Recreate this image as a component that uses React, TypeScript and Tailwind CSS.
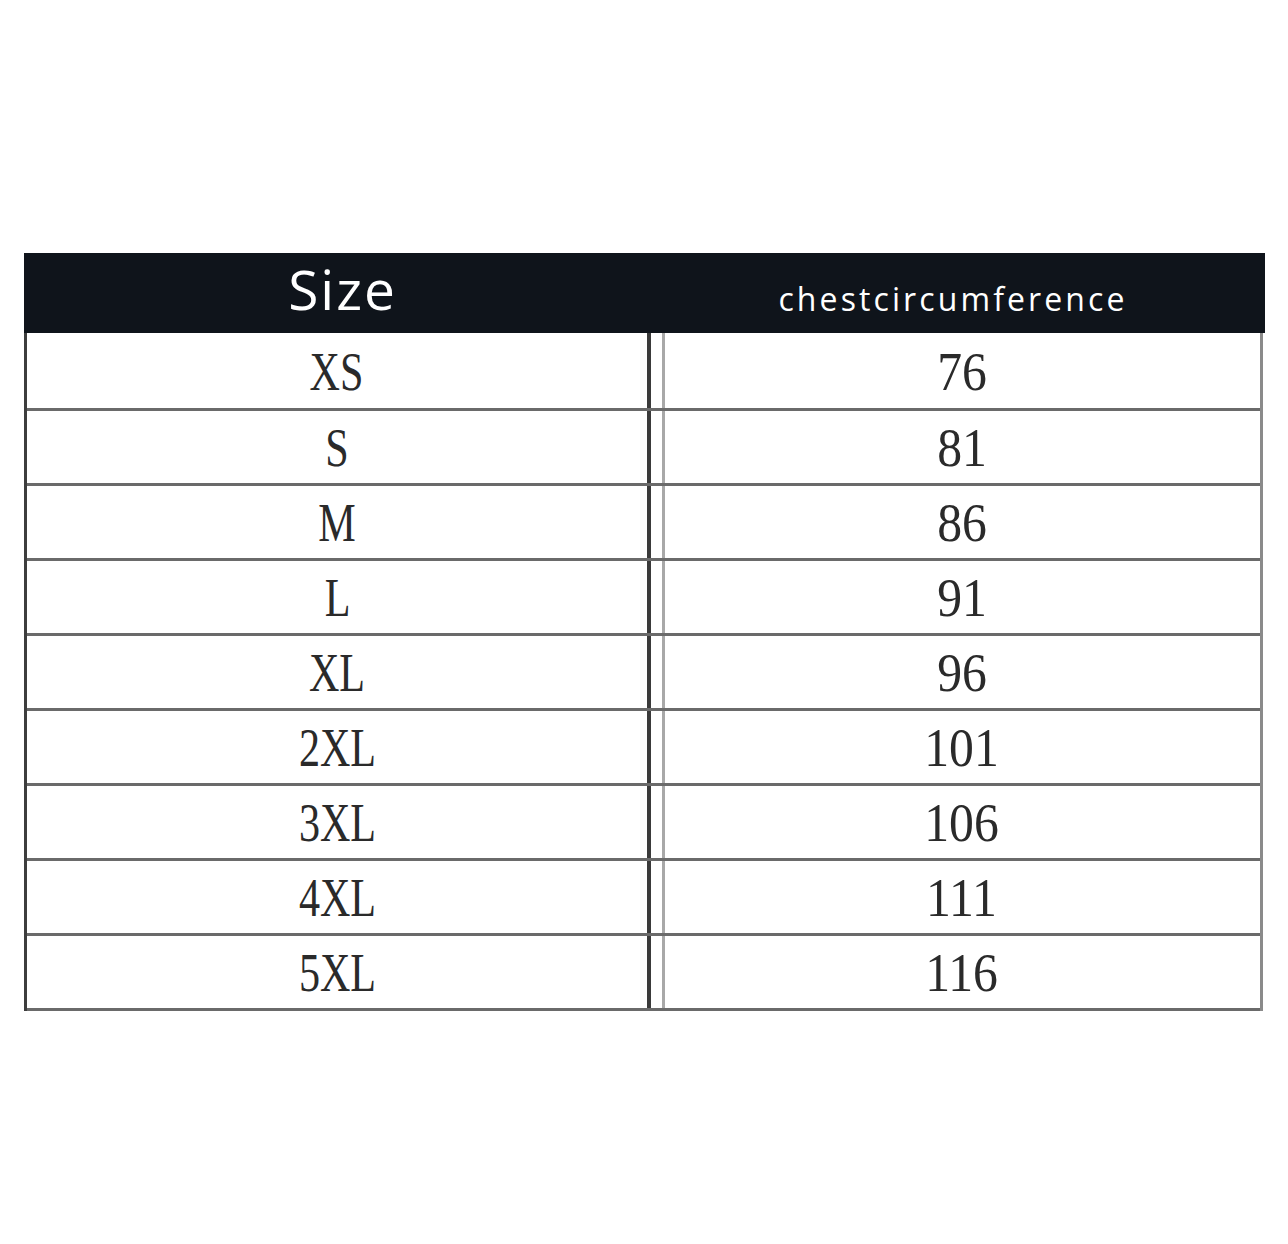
import React from 'react';

const rows = [
  ['XS', '76'],
  ['S', '81'],
  ['M', '86'],
  ['L', '91'],
  ['XL', '96'],
  ['2XL', '101'],
  ['3XL', '106'],
  ['4XL', '111'],
  ['5XL', '116'],
];

export default function App() {
  return (
    <div className="min-h-[1244px] bg-white pl-[24px] pt-[253px]">
      <div className="w-[1241px]">
        {/* header */}
        <div className="flex h-[80px] bg-[#0f141b] text-white" style={{ fontFamily: '"Open Sans", sans-serif' }}>
          <div className="flex w-[627px] items-center justify-center pb-[10px] pl-[10px] text-[55px] font-medium leading-none tracking-[2px]">
            Size
          </div>
          <div className="flex flex-1 items-center justify-center pr-[10px] pt-[12px] text-[32px] font-medium leading-none tracking-[3.1px]">
            chestcircumference
          </div>
        </div>

        {/* body */}
        <div
          className="w-[1239px] border-l-[3px] border-r-[3px] border-l-[#3d3d3d] border-r-[#8a8a8a] text-[#2a2a2a]"
          style={{ fontFamily: '"Liberation Serif", serif' }}
        >
          {rows.map(([size, chest], i) => (
            <div
              key={size}
              className={`flex border-b-[3px] border-[#6a6a6a] ${i === 0 ? 'h-[78px]' : 'h-[75px]'}`}
            >
              <div className="flex w-[624px] items-center justify-center border-r-[4px] border-[#3a3a3a] pt-[2px] text-[54px] leading-none">
                <span className="inline-block scale-x-[0.78]">{size}</span>
              </div>
              <div className="w-[11px]" />
              <div className="flex flex-1 items-center justify-center border-l-[3px] border-[#a8a8a8] pr-[2px] pt-[2px] text-[54px] leading-none">
                <span className="inline-block scale-x-[0.92]">{chest}</span>
              </div>
            </div>
          ))}
        </div>
      </div>
    </div>
  );
}
